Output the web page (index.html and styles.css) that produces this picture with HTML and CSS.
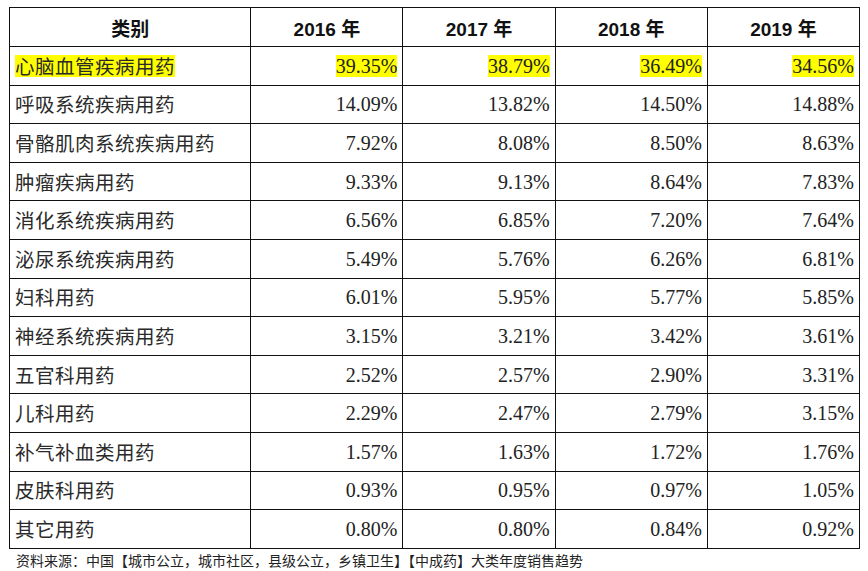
FILE: index.html
```html
<!DOCTYPE html>
<html lang="zh">
<head>
<meta charset="utf-8">
<title>中成药大类年度销售趋势</title>
<link rel="stylesheet" href="styles.css">
</head>
<body>
<div class="page">
<table class="data">
<colgroup>
<col class="c-cat"><col class="c-y"><col class="c-y"><col class="c-y"><col class="c-y">
</colgroup>
<thead>
<tr><th>类别</th><th>2016 年</th><th>2017 年</th><th>2018 年</th><th>2019 年</th></tr>
</thead>
<tbody>
<tr class="hl"><td><span class="mark">心脑血管疾病用药</span></td><td><span class="mark">39.35%</span></td><td><span class="mark">38.79%</span></td><td><span class="mark">36.49%</span></td><td><span class="mark">34.56%</span></td></tr>
<tr><td>呼吸系统疾病用药</td><td>14.09%</td><td>13.82%</td><td>14.50%</td><td>14.88%</td></tr>
<tr><td>骨骼肌肉系统疾病用药</td><td>7.92%</td><td>8.08%</td><td>8.50%</td><td>8.63%</td></tr>
<tr><td>肿瘤疾病用药</td><td>9.33%</td><td>9.13%</td><td>8.64%</td><td>7.83%</td></tr>
<tr><td>消化系统疾病用药</td><td>6.56%</td><td>6.85%</td><td>7.20%</td><td>7.64%</td></tr>
<tr><td>泌尿系统疾病用药</td><td>5.49%</td><td>5.76%</td><td>6.26%</td><td>6.81%</td></tr>
<tr><td>妇科用药</td><td>6.01%</td><td>5.95%</td><td>5.77%</td><td>5.85%</td></tr>
<tr><td>神经系统疾病用药</td><td>3.15%</td><td>3.21%</td><td>3.42%</td><td>3.61%</td></tr>
<tr><td>五官科用药</td><td>2.52%</td><td>2.57%</td><td>2.90%</td><td>3.31%</td></tr>
<tr><td>儿科用药</td><td>2.29%</td><td>2.47%</td><td>2.79%</td><td>3.15%</td></tr>
<tr><td>补气补血类用药</td><td>1.57%</td><td>1.63%</td><td>1.72%</td><td>1.76%</td></tr>
<tr><td>皮肤科用药</td><td>0.93%</td><td>0.95%</td><td>0.97%</td><td>1.05%</td></tr>
<tr><td>其它用药</td><td>0.80%</td><td>0.80%</td><td>0.84%</td><td>0.92%</td></tr>
</tbody>
</table>
<p class="source">资料来源：中国【城市公立，城市社区，县级公立，乡镇卫生】【中成药】大类年度销售趋势</p>
</div>
</body>
</html>
```
FILE: styles.css
```css
html, body {
  margin: 0;
  padding: 0;
  background: #ffffff;
}
.page {
  padding: 7px 0 0 9px;
}
.data {
  border-collapse: collapse;
  table-layout: fixed;
  width: 851px;
  font-family: "Liberation Serif", "Noto Sans CJK SC", serif;
  color: #222222;
}
.c-cat { width: 241px; }
.c-y { width: 152px; }
.data th,
.data td {
  border: 1px solid #111111;
  padding: 0 5px;
  overflow: hidden;
  white-space: nowrap;
}
.data th {
  height: 38px;
  font-family: "Liberation Sans", "Noto Sans CJK SC", sans-serif;
  font-weight: bold;
  font-size: 19px;
  color: #111111;
  text-align: center;
}
.data td {
  height: 37.6px;
  font-size: 20px;
  text-align: right;
  line-height: 22px;
}
.data td:first-child {
  text-align: left;
  font-family: "Noto Sans CJK SC", sans-serif;
  font-size: 19.5px;
  color: #2a2a2a;
  letter-spacing: 0.5px;
}
.mark {
  display: inline-block;
  background: #ffff00;
  line-height: 22px;
}
.source {
  margin: 2px 0 0 7px;
  font-family: "Noto Sans CJK SC", sans-serif;
  font-size: 14px;
  line-height: 18px;
  color: #222222;
}
```
